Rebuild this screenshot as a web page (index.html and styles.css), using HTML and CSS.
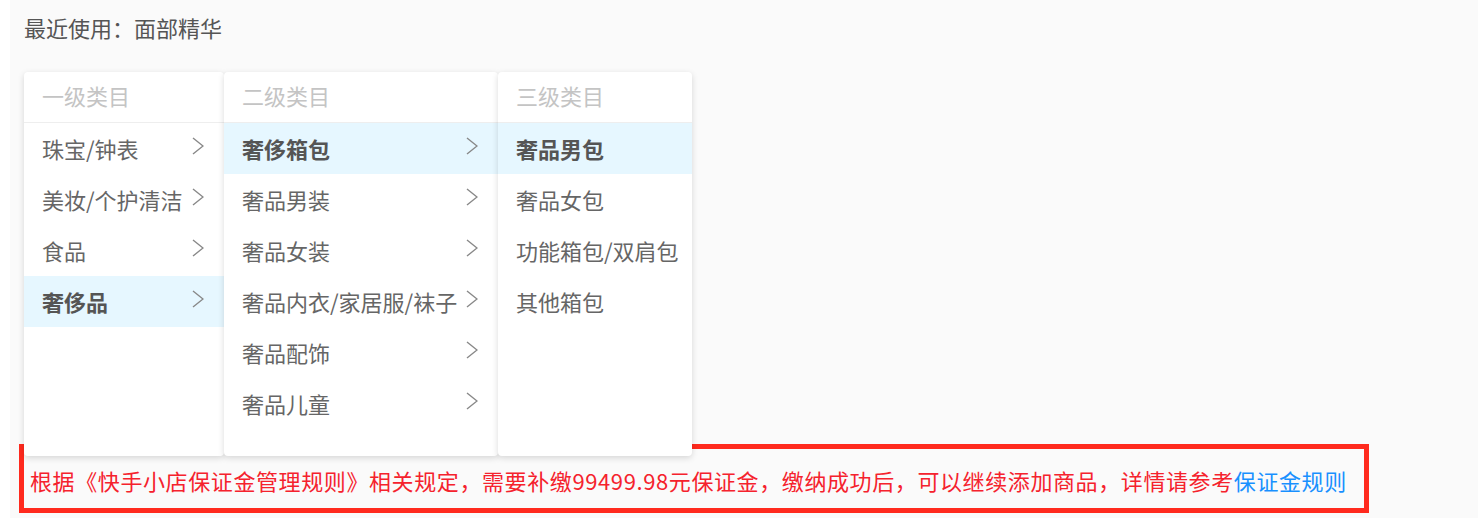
FILE: index.html
```html
<!DOCTYPE html>
<html lang="zh-CN">
<head>
  <meta charset="UTF-8" />
  <title>选择类目</title>
  <link rel="stylesheet" href="styles.css">
</head>
<body>

  <div class="page">
    <!-- 最近使用 -->
    <p class="recent">最近使用：面部精华</p>

    <!-- 类目级联 -->
    <div class="cascader">
      <ul class="col col-1">
        <li class="col-title">一级类目</li>
        <li class="item">珠宝/钟表<svg class="arrow" viewBox="0 0 12 18"><path d="M1 1l10 8-10 8"/></svg></li>
        <li class="item">美妆/个护清洁<svg class="arrow" viewBox="0 0 12 18"><path d="M1 1l10 8-10 8"/></svg></li>
        <li class="item">食品<svg class="arrow" viewBox="0 0 12 18"><path d="M1 1l10 8-10 8"/></svg></li>
        <li class="item active">奢侈品<svg class="arrow" viewBox="0 0 12 18"><path d="M1 1l10 8-10 8"/></svg></li>
      </ul>
      <ul class="col col-2">
        <li class="col-title">二级类目</li>
        <li class="item active">奢侈箱包<svg class="arrow" viewBox="0 0 12 18"><path d="M1 1l10 8-10 8"/></svg></li>
        <li class="item">奢品男装<svg class="arrow" viewBox="0 0 12 18"><path d="M1 1l10 8-10 8"/></svg></li>
        <li class="item">奢品女装<svg class="arrow" viewBox="0 0 12 18"><path d="M1 1l10 8-10 8"/></svg></li>
        <li class="item">奢品内衣/家居服/袜子<svg class="arrow" viewBox="0 0 12 18"><path d="M1 1l10 8-10 8"/></svg></li>
        <li class="item">奢品配饰<svg class="arrow" viewBox="0 0 12 18"><path d="M1 1l10 8-10 8"/></svg></li>
        <li class="item">奢品儿童<svg class="arrow" viewBox="0 0 12 18"><path d="M1 1l10 8-10 8"/></svg></li>
      </ul>
      <ul class="col col-3">
        <li class="col-title">三级类目</li>
        <li class="item active">奢品男包</li>
        <li class="item">奢品女包</li>
        <li class="item">功能箱包/双肩包</li>
        <li class="item">其他箱包</li>
      </ul>
    </div>

    <!-- 保证金提示 -->
    <div class="tip">
      根据《快手小店保证金管理规则》相关规定，需要补缴99499.98元保证金，缴纳成功后，可以继续添加商品，详情请参考<a href="#" class="tip-link">保证金规则</a>
      <span class="tip-mark" aria-hidden="true"></span>
    </div>
  </div>

</body>
</html>
```

FILE: styles.css
```css
* {
  box-sizing: border-box;
}

html, body {
  margin: 0;
  background: #fff;
  font-family: "Noto Sans CJK SC", "Noto Sans", sans-serif;
}

.page {
  margin-left: 10px;
  height: 518px;
  padding: 11px 14px 0;
  background: #fafafa;
}

.recent {
  margin: 0;
  font-size: 22px;
  line-height: 32px;
  color: #555;
}

/* cascader */
.cascader {
  display: flex;
  margin-top: 29px;
}

.col {
  list-style: none;
  margin: 0;
  padding: 0;
  height: 384px;
  background: #fff;
  border-radius: 4px;
  box-shadow: 0 2px 6px rgba(0,0,0,0.15);
  position: relative;
}

.col-1 { width: 200px; z-index: 1; }
.col-2 { width: 274px; z-index: 2; }
.col-3 { width: 194px; z-index: 3; }

.col-title {
  height: 51px;
  line-height: 47px;
  padding-left: 18px;
  font-size: 22px;
  color: #c4c4c4;
  border-bottom: 1px solid #eee;
}

.item {
  display: flex;
  align-items: center;
  justify-content: space-between;
  height: 51px;
  padding: 0 20px 2px 18px;
  font-size: 22px;
  color: #666;
  white-space: nowrap;
}

.item.active {
  background: #e6f7ff;
  color: #555;
  font-weight: 600;
}

.arrow {
  flex: none;
  width: 12px;
  height: 18px;
  margin-top: -4px;
  fill: none;
  stroke: #888;
  stroke-width: 1.4;
}

/* tip */
.tip {
  position: relative;
  height: 52px;
  line-height: 48px;
  padding-left: 6px;
  font-size: 22px;
  letter-spacing: 0.6px;
  color: #f5222d;
  white-space: nowrap;
}

.tip-link {
  color: #1890ff;
  text-decoration: none;
}

.tip-mark {
  position: absolute;
  left: -5px;
  top: -12px;
  width: 1350px;
  height: 69px;
  border: 5px solid #ff2a1e;
  pointer-events: none;
}
```
